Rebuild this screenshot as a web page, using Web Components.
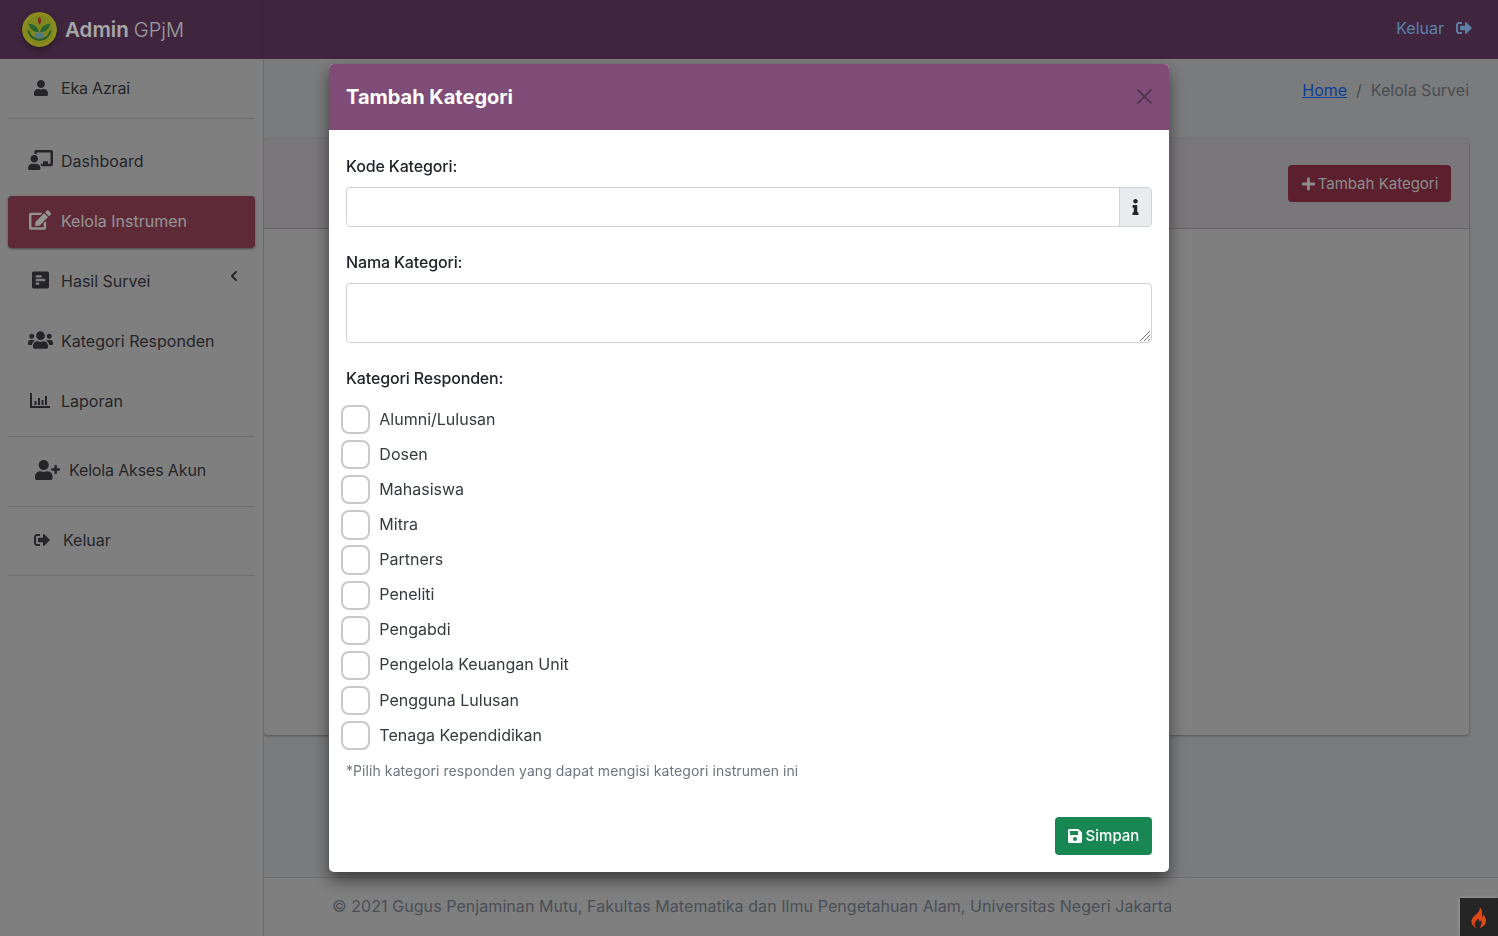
<!DOCTYPE html>
<html lang="id"><head><meta charset="utf-8"><title>Tambah Kategori</title>
<style>
html,body{margin:0;height:100%;overflow:hidden}
body{font-family:"Inter","Liberation Sans",sans-serif;font-size:16px;letter-spacing:0;color:#393a40;background:#bcbdbf}
</style></head><body>
<app-shell>
  <app-navbar slot="top"></app-navbar>
  <app-sidebar slot="side">
    <nav-item icon="user" w="16" h="16" pad="25" gap="12" tall="52" style="margin-top:2px;letter-spacing:-.2px">Eka Azrai</nav-item>
    <side-rule style="margin:4px 0 17px"></side-rule>
    <nav-item icon="teacher" w="25" h="20" pad="20" gap="8" raise>Dashboard</nav-item>
    <nav-item icon="edit" w="22" h="20" pad="21" gap="10" raise active>Kelola Instrumen</nav-item>
    <nav-item icon="poll" w="17" h="20" pad="24" gap="12" raise chevron>Hasil Survei</nav-item>
    <nav-item icon="users" w="25" h="20" pad="20" gap="8" raise>Kategori Responden</nav-item>
    <nav-item icon="chart" w="20" h="15" pad="22" gap="11" raise>Laporan</nav-item>
    <side-rule></side-rule>
    <nav-item icon="userplus" w="25" h="20" pad="27" gap="9" tall="69" lift="3" style="letter-spacing:-.15px">Kelola Akses Akun</nav-item>
    <side-rule></side-rule>
    <nav-item icon="signout" w="16" h="16" pad="26" gap="13" tall="68" lift="3">Keluar</nav-item>
    <side-rule></side-rule>
  </app-sidebar>
  <page-main slot="main"></page-main>
  <page-footer slot="foot">© 2021 Gugus Penjaminan Mutu, Fakultas Matematika dan Ilmu Pengetahuan Alam, Universitas Negeri Jakarta</page-footer>
</app-shell>
<modal-dialog heading="Tambah Kategori">
  <form-field label="Kode Kategori:" gap="10"><text-input addon></text-input></form-field>
  <form-field label="Nama Kategori:" gap="10"><area-input></area-input></form-field>
  <form-field label="Kategori Responden:" gap="12">
    <check-row>Alumni/Lulusan</check-row><check-row>Dosen</check-row><check-row>Mahasiswa</check-row><check-row>Mitra</check-row><check-row>Partners</check-row><check-row>Peneliti</check-row><check-row>Pengabdi</check-row><check-row>Pengelola Keuangan Unit</check-row><check-row>Pengguna Lulusan</check-row><check-row>Tenaga Kependidikan</check-row>
    <form-hint>*Pilih kategori responden yang dapat mengisi kategori instrumen ini</form-hint>
  </form-field>
  <save-button slot="footer">Simpan</save-button>
</modal-dialog>
<debug-toggle></debug-toggle>
<script>
const P={
user:[448,512,'M224 256c70.7 0 128-57.3 128-128S294.7 0 224 0 96 57.3 96 128s57.3 128 128 128zm89.6 32h-16.7c-22.2 10.2-46.9 16-72.9 16s-50.6-5.8-72.9-16h-16.7C60.2 288 0 348.2 0 422.4V464c0 26.5 21.5 48 48 48h352c26.5 0 48-21.5 48-48v-41.6c0-74.2-60.2-134.4-134.4-134.4z'],
teacher:[640,512,'M208 352c-2.39 0-4.78.35-7.06 1.09C187.98 357.3 174.35 360 160 360c-14.35 0-27.98-2.7-40.95-6.91-2.28-.74-4.66-1.09-7.05-1.09C49.94 352-.33 402.48 0 464.62.14 490.88 21.73 512 48 512h224c26.27 0 47.86-21.12 48-47.38.33-62.14-49.94-112.62-112-112.62zm-48-32c53.02 0 96-42.98 96-96s-42.98-96-96-96-96 42.98-96 96 42.98 96 96 96zM592 0H208c-26.47 0-48 22.25-48 49.59V96c23.42 0 45.1 6.78 64 17.8V64h352v288h-64v-64H384v64h-76.24c19.1 16.69 33.12 38.73 39.69 64H592c26.47 0 48-22.25 48-49.59V49.59C640 22.25 618.47 0 592 0z'],
edit:[576,512,'M402.6 83.2l90.2 90.2c3.8 3.8 3.8 10 0 13.8L274.4 405.6l-92.8 10.3c-12.4 1.4-22.9-9.1-21.5-21.5l10.3-92.8L388.8 83.2c3.8-3.8 10-3.8 13.8 0zm162-22.9l-48.8-48.8c-15.2-15.2-39.9-15.2-55.2 0l-35.4 35.4c-3.8 3.8-3.8 10 0 13.8l90.2 90.2c3.8 3.8 10 3.8 13.8 0l35.4-35.4c15.2-15.3 15.2-40 0-55.2zM384 346.2V448H64V128h229.8c3.2 0 6.2-1.3 8.5-3.5l40-40c7.6-7.6 2.2-20.5-8.5-20.5H48C21.5 64 0 85.5 0 112v352c0 26.5 21.5 48 48 48h352c26.5 0 48-21.5 48-48V306.2c0-10.7-12.9-16-20.5-8.5l-40 40c-2.2 2.3-3.5 5.3-3.5 8.5z'],
poll:[448,512,'M448 432V80c0-26.5-21.5-48-48-48H48C21.5 32 0 53.5 0 80v352c0 26.5 21.5 48 48 48h352c26.5 0 48-21.5 48-48zM112 192c-8.84 0-16-7.16-16-16v-32c0-8.84 7.16-16 16-16h128c8.84 0 16 7.16 16 16v32c0 8.84-7.16 16-16 16H112zm0 96c-8.84 0-16-7.16-16-16v-32c0-8.84 7.16-16 16-16h224c8.84 0 16 7.16 16 16v32c0 8.84-7.16 16-16 16H112zm0 96c-8.84 0-16-7.16-16-16v-32c0-8.84 7.16-16 16-16h64c8.84 0 16 7.16 16 16v32c0 8.84-7.16 16-16 16h-64z'],
users:[640,512,'M96 224c35.3 0 64-28.7 64-64s-28.7-64-64-64-64 28.7-64 64 28.7 64 64 64zm448 0c35.3 0 64-28.7 64-64s-28.7-64-64-64-64 28.7-64 64 28.7 64 64 64zm32 32h-64c-17.6 0-33.5 7.1-45.1 18.6 40.3 22.1 68.9 62 75.1 109.4h66c17.7 0 32-14.3 32-32v-32c0-35.3-28.7-64-64-64zm-256 0c61.9 0 112-50.1 112-112S381.9 32 320 32 208 82.1 208 144s50.1 112 112 112zm76.8 32h-8.3c-20.8 10-43.9 16-68.5 16s-47.6-6-68.5-16h-8.3C179.6 288 128 339.6 128 403.2V432c0 26.5 21.5 48 48 48h288c26.5 0 48-21.5 48-48v-28.8c0-63.6-51.6-115.2-115.2-115.2zm-223.7-13.4C161.5 263.1 145.6 256 128 256H64c-35.3 0-64 28.7-64 64v32c0 17.7 14.3 32 32 32h65.9c6.3-47.4 34.9-87.3 75.2-109.4z'],
chart:[20,15,'M0 0h2v13h18v2H0zM4.500 8h2v4h-2zM8 5h2v7H8zM11.500 7h2v5h-2zM15 3h2v9h-2z'],
userplus:[640,512,'M624 208h-64v-64c0-8.8-7.2-16-16-16h-32c-8.8 0-16 7.2-16 16v64h-64c-8.8 0-16 7.2-16 16v32c0 8.8 7.2 16 16 16h64v64c0 8.8 7.2 16 16 16h32c8.8 0 16-7.2 16-16v-64h64c8.8 0 16-7.2 16-16v-32c0-8.8-7.2-16-16-16zm-400 48c70.7 0 128-57.3 128-128S294.7 0 224 0 96 57.3 96 128s57.3 128 128 128zm89.6 32h-16.7c-22.2 10.2-46.9 16-72.9 16s-50.6-5.8-72.9-16h-16.7C60.2 288 0 348.2 0 422.4V464c0 26.5 21.5 48 48 48h352c26.5 0 48-21.5 48-48v-41.6c0-74.2-60.2-134.4-134.4-134.4z'],
signout:[512,512,'M497 273L329 441c-15 15-41 4.5-41-17v-96H152c-13.3 0-24-10.7-24-24v-96c0-13.3 10.7-24 24-24h136V88c0-21.4 25.9-32 41-17l168 168c9.3 9.4 9.3 24.6 0 34zM192 436v-40c0-6.6-5.4-12-12-12H96c-17.7 0-32-14.3-32-32V160c0-17.7 14.3-32 32-32h84c6.6 0 12-5.4 12-12V76c0-6.6-5.4-12-12-12H96c-53 0-96 43-96 96v192c0 53 43 96 96 96h84c6.6 0 12-5.4 12-12z'],
plus:[448,512,'M416 208H272V64c0-17.67-14.33-32-32-32h-32c-17.67 0-32 14.33-32 32v144H32c-17.67 0-32 14.33-32 32v32c0 17.67 14.33 32 32 32h144v144c0 17.67 14.33 32 32 32h32c17.67 0 32-14.33 32-32V304h144c17.67 0 32-14.33 32-32v-32c0-17.67-14.33-32-32-32z'],
save:[448,512,'M433.941 129.941l-83.882-83.882A48 48 0 0 0 316.118 32H48C21.49 32 0 53.49 0 80v352c0 26.51 21.49 48 48 48h352c26.51 0 48-21.49 48-48V163.882a48 48 0 0 0-14.059-33.941zM224 416c-35.346 0-64-28.654-64-64 0-35.346 28.654-64 64-64s64 28.654 64 64c0 35.346-28.654 64-64 64zm96-304.52V212c0 6.627-5.373 12-12 12H76c-6.627 0-12-5.373-12-12V108c0-6.627 5.373-12 12-12h228.52c3.183 0 6.235 1.264 8.485 3.515l3.48 3.48A11.996 11.996 0 0 1 320 111.48z'],
info:[192,512,'M20 424.229h20V279.771H20c-11.046 0-20-8.954-20-20V212c0-11.046 8.954-20 20-20h112c11.046 0 20 8.954 20 20v212.229h20c11.046 0 20 8.954 20 20V492c0 11.046-8.954 20-20 20H20c-11.046 0-20-8.954-20-20v-47.771c0-11.046 8.954-20 20-20zM96 0C56.235 0 24 32.235 24 72s32.235 72 72 72 72-32.235 72-72S135.764 0 96 0z'],
chevron:[320,512,'M34.52 239.03L228.87 44.69c9.37-9.37 24.57-9.37 33.94 0l22.67 22.67c9.36 9.36 9.38 24.52.04 33.9L131.49 256l154.02 154.75c9.34 9.38 9.32 24.54-.04 33.9l-22.67 22.67c-9.37 9.37-24.57 9.37-33.94 0L34.52 272.97c-9.37-9.37-9.37-24.57 0-33.94z']
};
const icon=(n,w,h)=>`<svg class="ic" width="${w}" height="${h}" viewBox="0 0 ${P[n][0]} ${P[n][1]}" fill="currentColor" style="display:block;flex:none" aria-hidden="true"><path d="${P[n][2]}"/></svg>`;
const def=(name,render)=>customElements.define(name,class extends HTMLElement{
  connectedCallback(){ if(this.shadowRoot) return; const s=this.attachShadow({mode:'open'}); s.innerHTML=render(this); }
});

def('app-shell',()=>`<style>
:host{display:grid;grid-template-columns:264px 1fr;grid-template-rows:60px 1fr 59px;height:936px;width:1498px;overflow:hidden}
</style><slot name="top"></slot><slot name="side"></slot><slot name="main"></slot><slot name="foot"></slot>`);

def('app-navbar',()=>`<style>
:host{display:flex;grid-column:1/3;height:59px;background:#613a5f;border-bottom:1px solid #c3c3c3;align-items:stretch}
.brand{display:flex;align-items:center;padding-left:22px;box-sizing:border-box;width:264px;border-right:1px solid #5c385a;font-size:20.500px;color:#fff}
.logo{width:35px;height:35px;margin-right:8px;border-radius:50%;box-shadow:0 3px 6px rgba(0,0,0,.3);flex:none;display:block;margin-top:-1px}
b{font-weight:600;margin-right:5px}span{font-weight:300;color:#f0f0f0;font-size:20px}
.end{margin-left:auto;display:flex;align-items:center;gap:12px;padding:0 26px 4px 0;color:#8cc5ff}
</style><div class="brand"><svg class="logo" viewBox="0 0 36 36"><circle cx="18" cy="18" r="18" fill="#d7d72e"/><circle cx="18" cy="18" r="14.500" fill="#c3cf34"/><path d="M18 4.500c2 3 2.500 5 0 8.500-2.500-3.500-2-5.500 0-8.500z" fill="#c8452a"/><path d="M7 12c5 0 9.500 3 10.500 8.500C12 21 8 18 7 12zM29 12c-5 0-9.500 3-10.500 8.500C24 21 28 18 29 12z" fill="#469a4a"/><path d="M14.500 21h7l2.500 6h-12z" fill="#86b8c4"/><path d="M5.500 19c2 7 6.500 10.500 12.500 10.500S28.500 26 30.500 19h-2c-2 6-5.500 8.500-10.500 8.500S9.500 25 7.500 19z" fill="#3a8e3e"/></svg><b>Admin</b><span>GPjM</span></div><div class="end">Keluar ${icon('signout',16,16)}</div>`);

def('app-sidebar',()=>`<style>
:host{display:block;grid-column:1;grid-row:2/4;background:#c3c3c3;border-right:1px solid #a3a3a3;padding:0 8px;box-sizing:border-box;width:264px;height:876px;overflow:hidden}
</style><slot></slot>`);

def('side-rule',()=>`<style>:host{display:block;height:1px;background:#a9a9a9}</style>`);

def('nav-item',(h)=>{
 const a=h.hasAttribute('active'),t=h.getAttribute('tall')||52,r=h.hasAttribute('raise');
 return `<style>
:host{display:flex;align-items:center;height:${t}px;margin-bottom:${h.getAttribute('tall')?0:8}px;padding:0 0 ${r?2:(h.getAttribute('lift')||0)}px ${h.getAttribute('pad')}px;gap:${h.getAttribute('gap')}px;border-radius:4px;box-sizing:border-box;position:relative;${a?'background:#914157;color:#e2e2e2;box-shadow:0 1px 3px rgba(0,0,0,.2),0 1px 2px rgba(0,0,0,.24);':''}}
.c{position:absolute;left:222px;top:14px}
${r?'.ic{margin-bottom:2px}':''}
</style>${icon(h.getAttribute('icon'),h.getAttribute('w'),h.getAttribute('h'))}<span><slot></slot></span>${h.hasAttribute('chevron')?`<span class="c">${icon('chevron',8,12)}</span>`:''}`});

def('page-main',()=>`<style>
:host{display:block;grid-column:2;grid-row:2;background:#bcbdbf;padding:0 29px 0 0;overflow:hidden;min-width:0}
.crumb{height:79px;display:flex;justify-content:flex-end;align-items:flex-start;padding-top:20px;line-height:20px;color:#72767b;box-sizing:border-box}
a{color:#1261e8;text-decoration:underline}
i{font-style:normal;margin:0 9px}
.card{height:596px;background:#c3c3c3;border-radius:4px;box-shadow:0 0 1px rgba(0,0,0,.3),0 1px 3px rgba(0,0,0,.3)}
.head{height:90px;border-bottom:1px solid #9d9d9d;background:#bcb7bc;display:flex;align-items:center;justify-content:flex-end;padding:0 18px;box-sizing:border-box;border-radius:4px 4px 0 0}
.btn{height:37px;width:163px;background:#8c3047;color:#d8d8d8;border-radius:4px;display:flex;align-items:center;justify-content:center;gap:3px;font-size:15px;padding-left:1px;box-sizing:border-box}
</style><div class="crumb"><a>Home</a><i>/</i><span>Kelola Survei</span></div>
<div class="card"><div class="head"><div class="btn">${icon('plus',13,16)}Tambah Kategori</div></div></div>`);

def('page-footer',()=>`<style>
:host{display:flex;grid-column:2;grid-row:3;align-items:center;background:#c3c3c3;border-top:1px solid #a9a9a9;color:#727a86;padding:0 0 2px 68px;box-sizing:border-box;height:59px;white-space:nowrap;letter-spacing:.065px}
</style><slot></slot>`);

def('modal-dialog',(h)=>`<style>
:host{position:fixed;inset:0;background:rgba(0,0,0,.35);display:block;z-index:10}
.m{position:absolute;left:329px;top:64px;width:840px;height:808px;background:#fff;border-radius:5px;box-shadow:0 8px 16px rgba(0,0,0,.5);display:flex;flex-direction:column;overflow:hidden}
header{height:66px;background:#7e4c76;color:#fff;display:flex;align-items:center;justify-content:space-between;padding:0 16px 0 17px;flex:none;box-sizing:border-box}
h5{margin:-1px 0 0;font-size:20px;font-weight:700}
.b{flex:1;padding:24px 17px 0;display:flex;flex-direction:column;gap:24px}
.f{display:flex;justify-content:flex-end;padding:0 17px 17px}
svg{display:block;margin-top:-2px}
</style><div class="m"><header><h5>${h.getAttribute('heading')}</h5><svg width="17" height="17" viewBox="0 0 17 17" stroke="#4a2f46" stroke-width="1.6" fill="none"><path d="M1.500 1.500l14 14M15.500 1.500l-14 14"/></svg></header><div class="b"><slot></slot></div><div class="f"><slot name="footer"></slot></div></div>`);

def('form-field',(h)=>`<style>
:host{display:block;color:#212529}
label{display:block;font-weight:500;line-height:24px;margin-bottom:${h.getAttribute('gap')}px;letter-spacing:-.15px}
</style><label>${h.getAttribute('label')}</label><slot></slot>`);

def('text-input',()=>`<style>
:host{display:flex;height:40px;border:1px solid #ced4da;border-radius:4px;box-sizing:border-box;overflow:hidden;margin:-1px 0}
.i{flex:1}.a{width:32px;box-sizing:border-box;background:#e9ecef;border-left:1px solid #ced4da;display:flex;align-items:center;justify-content:center;color:#212529}
</style><div class="i"></div><div class="a">${icon('info',7,16)}</div>`);

def('area-input',()=>`<style>
:host{display:block;height:60px;border:1px solid #ced4da;border-radius:4px;box-sizing:border-box;position:relative;margin:-1px 0}
svg{position:absolute;right:0;bottom:0}
</style><svg width="12" height="12" viewBox="0 0 12 12" stroke="#777" stroke-width="1"><path d="M11 1L1 11M11 5L5 11M11 9L9 11"/></svg>`);

def('check-row',()=>`<style>
:host{display:flex;align-items:center;height:35.130px;gap:9px;margin-left:-5px;color:#343a40}
i{width:29.330px;height:29.330px;border:2px solid #c9c9c9;border-radius:8px;box-sizing:border-box;background:#fff;display:block;flex:none}
span{margin-bottom:2px}
</style><i></i><span><slot></slot></span>`);

def('form-hint',()=>`<style>:host{display:block;font-size:14px;color:#6c757d;margin-top:7px;line-height:21px;letter-spacing:.075px}</style><slot></slot>`);

def('save-button',()=>`<style>
:host{display:flex;align-items:center;gap:4px;height:38px;width:97px;box-sizing:border-box;justify-content:center;background:#198754;color:#fff;border-radius:4px;font-weight:500;font-size:15px;padding-bottom:1px}
</style>${icon('save',14,16)}<slot></slot>`);

def('debug-toggle',()=>`<style>
:host{position:fixed;right:0;bottom:0;width:38px;height:38px;background:#252525;z-index:20;display:flex;align-items:center;justify-content:center;box-shadow:0 0 4px rgba(255,255,255,.25)}
</style><svg width="16" height="21" viewBox="0 0 16 21" aria-hidden="true"><path fill="#dd4814" d="M8.500 0c1 3-1 5-3 7C3 9 1 11 .5 13.500c-.4 3.500 2 6.500 5.500 7.500-2-1.500-3-3.500-2-5.500.7-1.500 2-2 2.500-4 1.500 1 2 2 2 3.500.8-.4 1.300-1 1.500-2 1 1.800 1 4.500-1.500 8 3.500-.8 6.500-3.500 6.500-7.500 0-2.500-1.200-4.500-2.500-6 0 1.200-.5 2-1.500 2.500C11.500 6.500 11.500 3 8.500 0z"/></svg>`);
</script></body></html>
